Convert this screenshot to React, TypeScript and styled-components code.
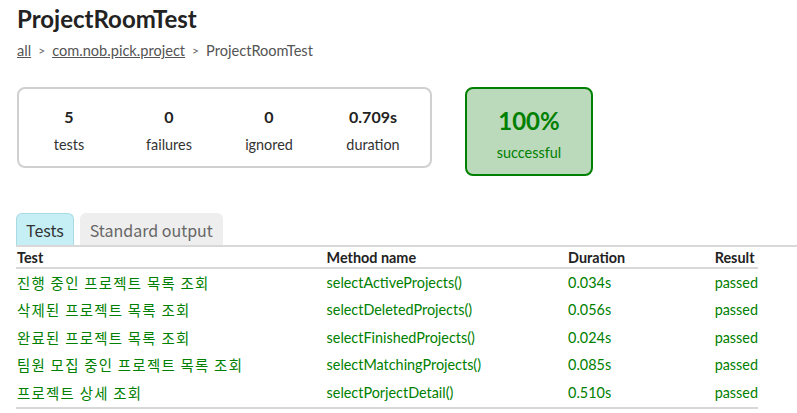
import styled, { createGlobalStyle } from 'styled-components';

const GlobalStyle = createGlobalStyle`
  html, body {
    margin: 0;
    padding: 0;
    background: #ffffff;
  }
  body {
    font-family: 'Lato', 'Noto Sans CJK KR', sans-serif;
    color: #222222;
  }
`;

const TESTS = [
  { name: '진행 중인 프로젝트 목록 조회', method: 'selectActiveProjects()', duration: '0.034s' },
  { name: '삭제된 프로젝트 목록 조회', method: 'selectDeletedProjects()', duration: '0.056s' },
  { name: '완료된 프로젝트 목록 조회', method: 'selectFinishedProjects()', duration: '0.024s' },
  { name: '팀원 모집 중인 프로젝트 목록 조회', method: 'selectMatchingProjects()', duration: '0.085s' },
  { name: '프로젝트 상세 조회', method: 'selectPorjectDetail()', duration: '0.510s' },
];

const COUNTERS = [
  { value: '5', label: 'tests' },
  { value: '0', label: 'failures' },
  { value: '0', label: 'ignored' },
  { value: '0.709s', label: 'duration' },
];

export default function App() {
  return (
    <>
      <GlobalStyle />
      <Content>
        <Title>ProjectRoomTest</Title>
        <Breadcrumbs>
          <Crumb>all</Crumb>
          <Sep>&gt;</Sep>
          <Crumb>com.nob.pick.project</Crumb>
          <Sep>&gt;</Sep>
          <span>ProjectRoomTest</span>
        </Breadcrumbs>

        <Summary>
          <SummaryGroup>
            {COUNTERS.map((c) => (
              <Counter key={c.label}>
                <CounterValue>{c.value}</CounterValue>
                <CounterLabel>{c.label}</CounterLabel>
              </Counter>
            ))}
          </SummaryGroup>
          <SuccessRate>
            <RateValue>100%</RateValue>
            <RateLabel>successful</RateLabel>
          </SuccessRate>
        </Summary>

        <TabLinks>
          <Tab selected>Tests</Tab>
          <Tab>Standard output</Tab>
        </TabLinks>

        <Table>
          <thead>
            <tr>
              <Th style={{ width: 310 }}>Test</Th>
              <Th style={{ width: 241 }}>Method name</Th>
              <Th style={{ width: 146 }}>Duration</Th>
              <Th>Result</Th>
            </tr>
          </thead>
          <tbody>
            {TESTS.map((t) => (
              <tr key={t.method}>
                <Td korean>{t.name}</Td>
                <Td>{t.method}</Td>
                <Td>{t.duration}</Td>
                <Td>passed</Td>
              </tr>
            ))}
          </tbody>
        </Table>
      </Content>
    </>
  );
}

const Content = styled.div`
  padding: 0 16px 0 17px;
`;

const Title = styled.h1`
  margin: 0;
  padding-top: 4px;
  font-size: 24px;
  line-height: 30px;
  font-weight: bold;
  color: #222222;
`;

const Breadcrumbs = styled.div`
  margin-top: 8px;
  display: flex;
  align-items: center;
  gap: 7px;
  font-size: 14.6px;
  line-height: 18px;
  color: #555555;
`;

const Crumb = styled.a`
  color: #555555;
  text-decoration: underline;
`;

const Sep = styled.span`
  font-size: 12px;
  color: #666666;
`;

const Summary = styled.div`
  margin-top: 27px;
  display: flex;
  align-items: flex-start;
  gap: 33px;
`;

const SummaryGroup = styled.div`
  box-sizing: border-box;
  width: 415px;
  height: 81px;
  border: solid 2px #d0d0d0;
  border-radius: 8px;
  display: flex;
  padding: 18px 0 0 0;
`;

const Counter = styled.div`
  width: 100px;
  text-align: center;

  &:last-child {
    width: 108px;
  }
`;

const CounterValue = styled.div`
  font-size: 16px;
  font-weight: bold;
  line-height: 20px;
  color: #222222;
`;

const CounterLabel = styled.div`
  margin-top: 9px;
  font-size: 14.4px;
  line-height: 18px;
  color: #333333;
`;

const SuccessRate = styled.div`
  box-sizing: border-box;
  width: 128px;
  height: 89px;
  border: solid 2px #008000;
  border-radius: 8px;
  background-color: #bbd9bb;
  text-align: center;
  padding-top: 17px;
`;

const RateValue = styled.div`
  font-size: 24px;
  font-weight: bold;
  line-height: 30px;
  color: #008000;
`;

const RateLabel = styled.div`
  margin-top: 8px;
  font-size: 14.4px;
  line-height: 18px;
  color: #008000;
`;

const TabLinks = styled.ul`
  margin: 37px -16px 0 -1px;
  padding: 0;
  list-style: none;
  display: flex;
  gap: 6px;
  border-bottom: solid 2px #d8d8d8;
`;

const Tab = styled.li<{ selected?: boolean }>`
  box-sizing: border-box;
  height: 32px;
  padding: 0 9px;
  font-family: 'Noto Sans CJK KR', sans-serif;
  font-size: 16px;
  line-height: 32px;
  border-radius: 6px 6px 0 0;
  border: solid 1px ${({ selected }) => (selected ? '#a8dbe4' : '#eeeeee')};
  border-bottom: none;
  background-color: ${({ selected }) => (selected ? '#c5eef5' : '#eeeeee')};
  color: ${({ selected }) => (selected ? '#333333' : '#666666')};
`;

const Table = styled.table`
  border-collapse: collapse;
  width: 742px;
  margin-left: -1px;
  border-bottom: solid 2px #d8d8d8;
`;

const Th = styled.th`
  text-align: left;
  font-size: 14.4px;
  font-weight: bold;
  line-height: 18px;
  padding: 2px 0 0 1px;
  border-bottom: solid 2px #d8d8d8;
  color: #222222;
`;

const Td = styled.td<{ korean?: boolean }>`
  font-size: 14.4px;
  line-height: 20px;
  height: 27.5px;
  padding: 0 0 0 1px;
  color: #008000;
  font-family: ${({ korean }) =>
    korean ? "'Noto Sans CJK KR', sans-serif" : "'Lato', 'Noto Sans CJK KR', sans-serif"};
  letter-spacing: ${({ korean }) => (korean ? '1.3px' : 'normal')};
  vertical-align: middle;
`;
